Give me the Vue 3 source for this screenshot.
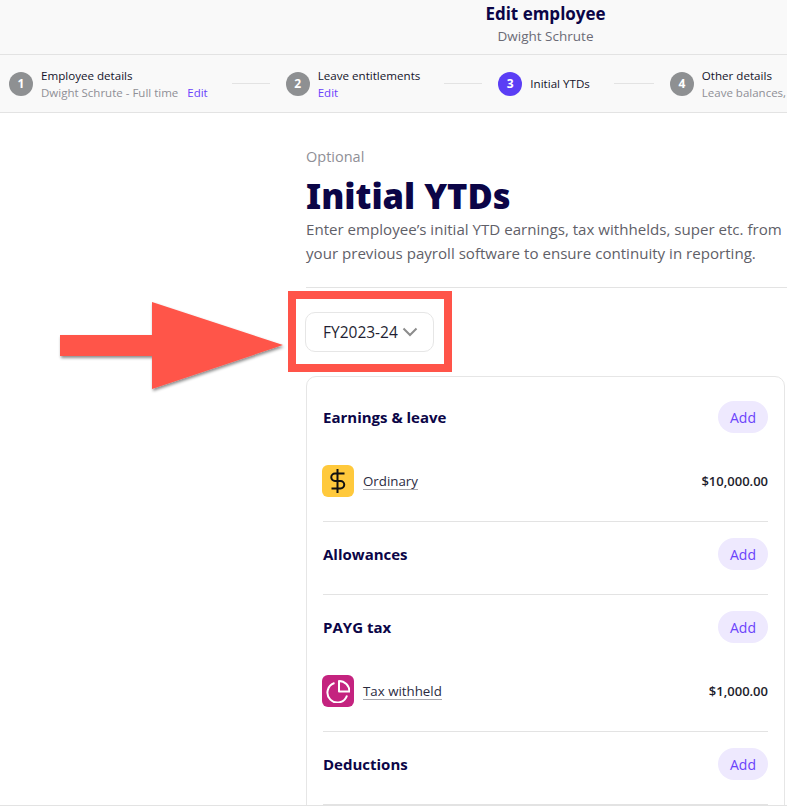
<template>
  <div class="page">
    <header class="top">
      <div class="top__title">Edit employee</div>
      <div class="top__name">Dwight Schrute</div>
    </header>

    <nav class="steps">
      <template v-for="(step, i) in steps" :key="step.n">
        <div v-if="i > 0" class="steps__line" :style="{ width: step.lineWidth + 'px' }"></div>
        <div class="step" :class="{ 'step--active': step.active }">
          <span class="step__num">{{ step.n }}</span>
          <div class="step__text">
            <div class="step__title">{{ step.title }}</div>
            <div v-if="step.sub || step.edit" class="step__sub">
              <span v-if="step.sub">{{ step.sub }}</span>
              <a v-if="step.edit" class="step__edit">Edit</a>
            </div>
          </div>
        </div>
      </template>
    </nav>

    <main class="main">
      <div class="optional">Optional</div>
      <h1 class="heading">Initial YTDs</h1>
      <p class="intro">Enter employee’s initial YTD earnings, tax withhelds, super etc. from your previous payroll software to ensure continuity in reporting.</p>
      <div class="rule"></div>

      <button class="year">
        <span>FY2023-24</span>
        <svg width="16" height="10" viewBox="0 0 16 10" fill="none" aria-hidden="true">
          <path d="M1.5 1.5 8 8l6.5-6.5" stroke="#8c8c8c" stroke-width="2"/>
        </svg>
      </button>

      <section class="card">
        <div v-for="group in groups" :key="group.title" class="group">
          <div class="group__head">
            <h2 class="group__title">{{ group.title }}</h2>
            <button class="add">Add</button>
          </div>
          <div v-for="item in group.items" :key="item.name" class="item">
            <span class="item__icon" :class="`item__icon--${item.kind}`">
              <svg v-if="item.kind === 'money'" width="24" height="24" viewBox="0 0 24 24" fill="none" aria-hidden="true">
                <path d="M11.5 0v24" stroke="#111" stroke-width="2"/>
                <path d="M18.5 4.5H9a3.75 3.75 0 0 0 0 7.5h5.5a3.75 3.75 0 0 1 0 7.5H5.5" stroke="#111" stroke-width="2"/>
              </svg>
              <svg v-else width="24" height="24" viewBox="0 0 24 24" fill="none" aria-hidden="true">
                <path d="M8.5 4A10 10 0 1 0 21 16.5" stroke="#fff" stroke-width="2"/>
                <path d="M13 2v10.5h10.5A10.5 10.5 0 0 0 13 2Z" stroke="#fff" stroke-width="2" stroke-linejoin="round"/>
              </svg>
            </span>
            <span class="item__name">{{ item.name }}</span>
            <span class="item__amount">{{ item.amount }}</span>
          </div>
        </div>
      </section>
    </main>

    <div class="foot"></div>

    <div class="mark-box"></div>
    <svg class="mark-arrow" width="240" height="100" viewBox="0 0 240 100" aria-hidden="true">
      <defs>
        <filter id="arrowShadow" x="-10%" y="-10%" width="120%" height="130%">
          <feDropShadow dx="1" dy="2" stdDeviation="1.5" flood-color="#000" flood-opacity="0.45"/>
        </filter>
      </defs>
      <path d="M2 35h92V2l131 43L94 89V56H2Z" fill="#ff5449" filter="url(#arrowShadow)"/>
    </svg>
  </div>
</template>

<script setup>
const steps = [
  { n: 1, title: 'Employee details', sub: 'Dwight Schrute - Full time', edit: true },
  { n: 2, title: 'Leave entitlements', edit: true, lineWidth: 38 },
  { n: 3, title: 'Initial YTDs', active: true, lineWidth: 38 },
  { n: 4, title: 'Other details', sub: 'Leave balances,', lineWidth: 40 },
]

const groups = [
  { title: 'Earnings & leave', items: [{ name: 'Ordinary', amount: '$10,000.00', kind: 'money' }] },
  { title: 'Allowances', items: [] },
  { title: 'PAYG tax', items: [{ name: 'Tax withheld', amount: '$1,000.00', kind: 'pie' }] },
  { title: 'Deductions', items: [] },
]
</script>

<style>
html, body {
  margin: 0;
  background: #fff;
}
</style>

<style scoped>
.page {
  position: relative;
  width: 787px;
  height: 807px;
  overflow: hidden;
  font-family: "Open Sans", "Noto Sans", sans-serif;
  color: #0d0a3c;
  background: #fff;
  box-sizing: border-box;
}

.top {
  height: 54px;
  background: #f9f9f9;
  border-bottom: 1px solid #e3e3e3;
  text-align: center;
  padding-left: 304px;
}

.top__title {
  font-size: 17px;
  line-height: 28px;
  font-weight: 700;
  color: #0b0547;
}

.top__name {
  font-size: 13.5px;
  line-height: 16px;
  color: #6b6b76;
}

.steps {
  display: flex;
  align-items: center;
  height: 57px;
  padding-left: 9px;
  background: #f9f9f9;
  border-bottom: 1px solid #e3e3e3;
  white-space: nowrap;
}

.steps__line {
  flex: none;
  height: 1px;
  margin: 0 16px 0 24px;
  background: #e3e3e3;
}

.step {
  flex: none;
  display: flex;
  align-items: center;
  gap: 8px;
}

.step__num {
  width: 24px;
  height: 24px;
  border-radius: 50%;
  background: #8e9092;
  color: #fff;
  font-size: 12px;
  font-weight: 700;
  line-height: 24px;
  text-align: center;
}

.step--active .step__num {
  background: #5b3ef5;
}

.step__title {
  font-size: 11.6px;
  line-height: 17px;
  font-weight: 500;
  color: #14142b;
}

.step__sub {
  font-size: 11.5px;
  line-height: 17px;
  color: #8f8f96;
  display: flex;
  gap: 9px;
}

.step__edit {
  color: #6b42fb;
}

.main {
  padding: 34px 0 0 306px;
}

.optional {
  font-size: 14.5px;
  line-height: 20px;
  color: #8f8f96;
}

.heading {
  margin: 8px 0 0;
  font-family: "Noto Sans", "Open Sans", sans-serif;
  font-size: 34.5px;
  line-height: 42px;
  font-weight: 900;
  color: #0b0547;
}

.intro {
  margin: 0;
  font-size: 15.1px;
  line-height: 24px;
  width: 481px;
  color: #5f6068;
}

.rule {
  height: 1px;
  margin-top: 22px;
  background: #e3e3e3;
}

.year {
  display: flex;
  align-items: center;
  gap: 4px;
  width: 129px;
  height: 40px;
  margin: 24px 0 24px -1px;
  padding: 0 0 0 17px;
  border: 1px solid #e6e6e6;
  border-radius: 10px;
  background: #fff;
  font: inherit;
  font-size: 15.5px;
  color: #1f1f33;
  box-sizing: border-box;
}

.card {
  width: 479px;
  box-sizing: border-box;
  padding: 8px 16px 0;
  border: 1px solid #e6e6e6;
  border-radius: 10px 10px 0 0;
}

.group {
  padding: 16px 0 0;
  border-bottom: 1px solid #e3e3e3;
}

.group__head {
  display: flex;
  align-items: center;
  justify-content: space-between;
  height: 32px;
  margin-bottom: 24px;
}

.group__title {
  margin: 0;
  font-size: 15px;
  font-weight: 700;
  color: #0b0547;
}

.add {
  width: 50px;
  height: 32px;
  padding: 0;
  border: 0;
  border-radius: 16px;
  background: #eee9fe;
  color: #6b42fb;
  font: inherit;
  font-size: 14px;
  font-weight: 500;
}

.item {
  display: flex;
  align-items: center;
  height: 32px;
  margin-top: 32px;
  margin-bottom: 24px;
}

.item__icon {
  display: flex;
  align-items: center;
  justify-content: center;
  width: 32px;
  height: 32px;
  margin-left: -1px;
  border-radius: 6px;
}

.item__icon--money {
  background: #ffc93c;
}

.item__icon--pie {
  background: #c4237f;
}

.item__name {
  margin-left: 9px;
  font-size: 13.3px;
  font-weight: 500;
  color: #2b2b3f;
  border-bottom: 1px solid #a8a8ae;
  line-height: 16px;
}

.item__amount {
  margin-left: auto;
  font-size: 13px;
  font-weight: 600;
  color: #1c1c2b;
}

.foot {
  position: absolute;
  left: 0;
  right: 0;
  bottom: 0;
  height: 1px;
  background: #fff;
  border-top: 1px solid #e3e3e3;
}

.mark-box {
  position: absolute;
  left: 288px;
  top: 291px;
  width: 164px;
  height: 81px;
  box-sizing: border-box;
  border: 8px solid #ff5449;
}

.mark-arrow {
  position: absolute;
  left: 58px;
  top: 300px;
}
</style>
